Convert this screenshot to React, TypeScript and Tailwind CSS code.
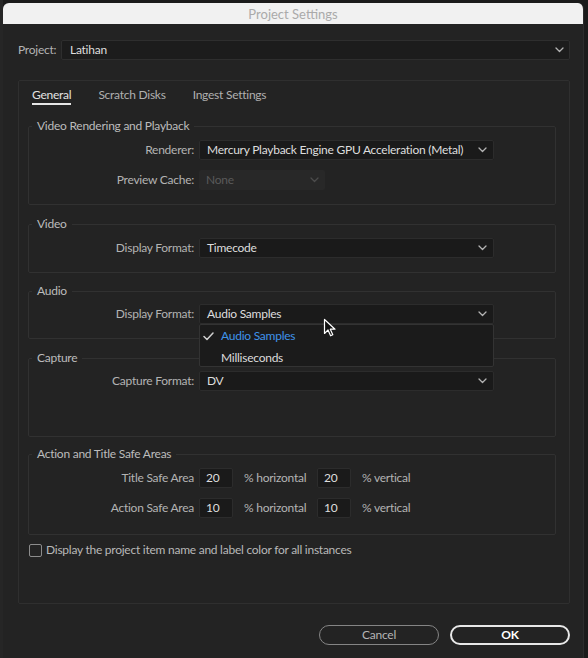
import React from "react";

const Chevron = ({ color = "#b4b4b4" }: { color?: string }) => (
  <svg width="9" height="6" viewBox="0 0 9 6" fill="none">
    <polyline points="1,1 4.5,4.5 8,1" stroke={color} strokeWidth="1.3" strokeLinecap="round" strokeLinejoin="round" />
  </svg>
);

const Select = ({ value, w = "w-[295px]", children }: { value: string; w?: string; children?: React.ReactNode }) => (
  <div className={`relative ${w} h-[20px]`}>
    <div className="h-full flex items-center justify-between pl-[7px] pr-[6px] bg-[#1a1a1a] border border-[#2c2c2c] rounded-[2px] text-[#dedede]">
      <span>{value}</span>
      <Chevron />
    </div>
    {children}
  </div>
);

const Row = ({ label, children }: { label: string; children: React.ReactNode }) => (
  <div className="flex items-center">
    <div className="w-[165px] text-right text-[#b3b3b3]">{label}</div>
    <div className="ml-[5px]">{children}</div>
  </div>
);

const Group = ({ title, className = "", children }: { title: string; className?: string; children: React.ReactNode }) => (
  <fieldset className={`border border-[#313131] rounded-[2px] ${className}`}>
    <legend className="ml-[3px] px-[5px] leading-[16px] text-[#bcbcbc]">{title}</legend>
    {children}
  </fieldset>
);

const NumInput = ({ v }: { v: string }) => (
  <div className="w-[34px] h-[20px] flex items-center pl-[6px] bg-[#1a1a1a] border border-[#2c2c2c] rounded-[2px] text-[#dedede]">{v}</div>
);

export default function App() {
  return (
    <div
      className="relative w-[588px] h-[658px] bg-[#1b1b1b] flex pt-[3px] pl-[3px] pr-[4px] overflow-hidden text-[12px] leading-[16px] tracking-[-0.25px]"
      style={{ fontFamily: "Lato, 'Open Sans', sans-serif" }}
    >
      <div className="absolute left-0 top-0 w-[3px] h-full bg-[#262626]" />
      <div className="flex-1 flex flex-col bg-[#232323] rounded-t-[6px] overflow-hidden border-r border-[#2c2c2c]">
        <div className="h-[21px] shrink-0 bg-[#f1f1f1] flex items-center justify-center text-[13px] tracking-normal text-[#aaaaaa]">
          Project Settings
        </div>
        <div className="pl-[15px] pr-[13px] flex flex-col">
          <div className="mt-[16px] flex items-center h-[20px]">
            <div className="w-[43px] text-[#b3b3b3]">Project:</div>
            <div className="flex-1 h-full flex items-center justify-between pl-[8px] pr-[5px] bg-[#1c1c1c] border border-[#2e2e2e] rounded-[2px] text-[#dedede]">
              <span>Latihan</span>
              <Chevron />
            </div>
          </div>

          <div className="mt-[20px] h-[524px] border border-[#2f2f2f] rounded-[2px] flex flex-col pl-[9px] pr-[13px]">
            <div className="flex gap-[27px] pl-[4px] pt-[6px]">
              <div className="text-[#e2e2e2] border-b-2 border-[#e6e6e6]">General</div>
              <div className="text-[#b0b0b0]">Scratch Disks</div>
              <div className="text-[#b0b0b0]">Ingest Settings</div>
            </div>

            <Group title="Video Rendering and Playback" className="mt-[13px] pt-[6px] pb-[14px]">
              <div className="flex flex-col gap-[10px]">
                <Row label="Renderer:">
                  <Select value="Mercury Playback Engine GPU Acceleration (Metal)" />
                </Row>
                <Row label="Preview Cache:">
                  <div className="w-[126px] h-[20px] flex items-center justify-between pl-[7px] pr-[6px] bg-[#282828] rounded-[2px] text-[#5a5a5a]">
                    <span>None</span>
                    <Chevron color="#4c4c4c" />
                  </div>
                </Row>
              </div>
            </Group>

            <Group title="Video" className="mt-[11px] pt-[6px] pb-[14px]">
              <Row label="Display Format:">
                <Select value="Timecode" />
              </Row>
            </Group>

            <Group title="Audio" className="mt-[10px] pt-[5px] pb-[14px]">
              <Row label="Display Format:">
                <Select value="Audio Samples">
                  <div className="absolute z-10 left-0 top-full w-full h-[43px] bg-[#1b1b1b] border border-[#333333] rounded-[2px] flex flex-col pt-[1px]">
                    <div className="flex items-center h-[20px] shrink-0">
                      <div className="w-[21px] flex justify-end pr-[7px]">
                        <svg width="11" height="9" viewBox="0 0 11 9" fill="none">
                          <polyline points="1,4.5 4,7.5 10,1" stroke="#cfcfcf" strokeWidth="1.5" strokeLinecap="round" strokeLinejoin="round" />
                        </svg>
                      </div>
                      <span className="text-[#3f93ea]">Audio Samples</span>
                    </div>
                    <div className="flex items-center h-[20px] mt-[2px] shrink-0 pl-[21px] text-[#dcdcdc]">Milliseconds</div>
                  </div>
                </Select>
              </Row>
            </Group>

            <Group title="Capture" className="mt-[11px] pt-[5px] pb-[45px]">
              <Row label="Capture Format:">
                <Select value="DV" />
              </Row>
            </Group>

            <Group title="Action and Title Safe Areas" className="mt-[9px] pt-[6px] pb-[16px]">
              <div className="flex flex-col gap-[10px]">
                {[
                  ["Title Safe Area", "20"],
                  ["Action Safe Area", "10"],
                ].map(([l, v]) => (
                  <Row key={l} label={l}>
                    <div className="flex items-center text-[#b3b3b3]">
                      <NumInput v={v} />
                      <span className="ml-[11px] w-[73px]">% horizontal</span>
                      <NumInput v={v} />
                      <span className="ml-[11px]">% vertical</span>
                    </div>
                  </Row>
                ))}
              </div>
            </Group>

            <div className="mt-[7px] ml-[1px] flex items-center">
              <div className="w-[13px] h-[13px] border-[1.5px] border-[#8c8c8c] rounded-[2px]" />
              <span className="ml-[4px] text-[#b8b8b8]">Display the project item name and label color for all instances</span>
            </div>
          </div>

          <div className="mt-[21px] flex justify-end gap-[11px]">
            <div className="w-[120px] h-[20px] rounded-full border-[1.5px] border-[#858585] flex items-center justify-center text-[#b5b5b5]">
              Cancel
            </div>
            <div className="w-[120px] h-[20px] rounded-full border-2 border-[#e8e8e8] flex items-center justify-center text-white font-bold">
              OK
            </div>
          </div>
        </div>
      </div>

      <svg className="absolute left-[323px] top-[318px] z-20" width="13" height="19" viewBox="0 0 13 19">
        <path d="M1.5 1.5 L1.5 15.5 L5 12 L7.6 17.8 L9.8 16.8 L7.3 11.2 L12 11.2 Z" fill="#111" stroke="#fff" strokeWidth="1.2" strokeLinejoin="round" />
      </svg>
    </div>
  );
}
